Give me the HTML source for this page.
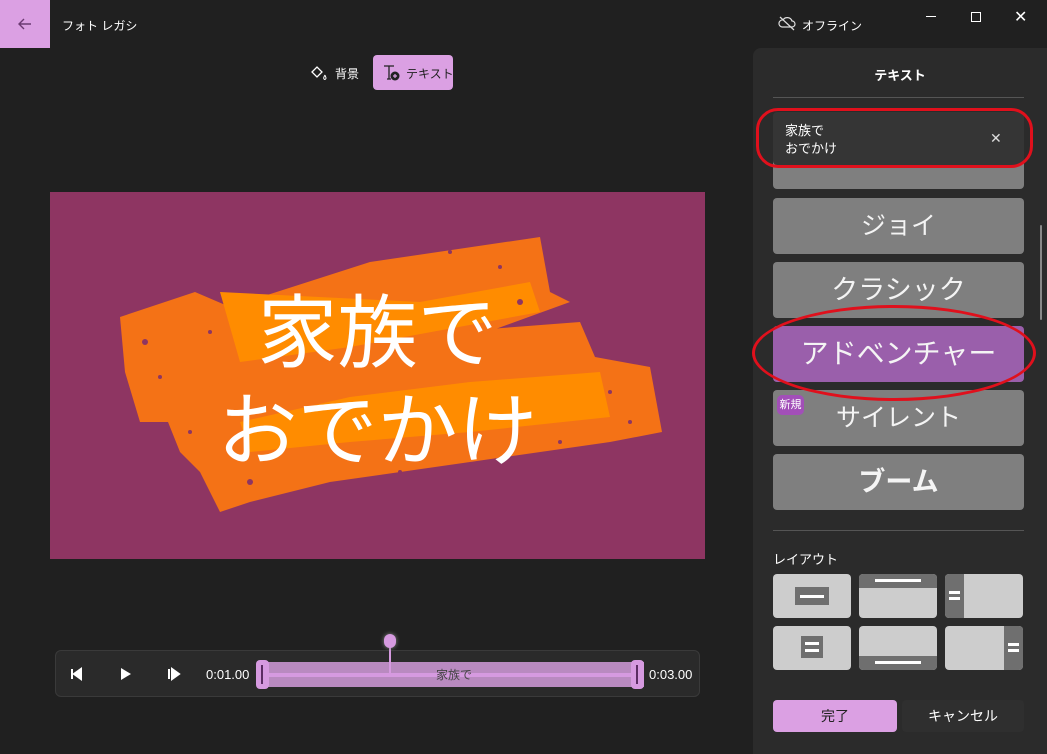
<!DOCTYPE html>
<html><head><meta charset="utf-8"><style>
*{margin:0;padding:0;box-sizing:border-box}
body{width:1047px;height:754px;background:#202020;font-family:"Liberation Sans","Noto Sans CJK JP",sans-serif;color:#fff;position:relative;overflow:hidden}
.a{position:absolute}
.style{position:absolute;left:773px;width:251px;height:56px;background:#7f7f7f;border-radius:4px;text-align:center;color:#f4f4f4;font-size:25px;line-height:56px}
.tile{position:absolute;width:78px;height:44px;background:#cdcdcd;border-radius:4px;overflow:hidden}
.bar{position:absolute;background:#fff;height:3px}
</style></head><body>
<div class="a" style="left:0;top:0;width:50px;height:48px;background:#dba0e3"></div>
<svg class="a" style="left:17px;top:17px" width="16" height="14"><path d="M14 7H2M7 2L2 7l5 5" stroke="#6b3a72" stroke-width="1.4" fill="none"/></svg>
<div class="a" style="left:62px;top:17px;font-size:12px">フォト レガシ</div>
<svg class="a" style="left:778px;top:15px" width="18" height="16"><path d="M4 12h10a3 3 0 0 0 0-6 5 5 0 0 0-9-1 3.5 3.5 0 0 0-1 7zM2 2l14 13" stroke="#ddd" stroke-width="1.2" fill="none"/></svg>
<div class="a" style="left:802px;top:17px;font-size:12px">オフライン</div>
<div class="a" style="left:926px;top:16px;width:10px;height:1px;background:#fff"></div>
<div class="a" style="left:971px;top:12px;width:10px;height:10px;border:1px solid #fff"></div>
<div class="a" style="left:1014px;top:7px;font-size:16px">✕</div>
<svg class="a" style="left:309px;top:64px" width="20" height="18"><path d="M3 8l5-5 5 5-5 5z" stroke="#fff" stroke-width="1.3" fill="none"/><path d="M16 11c-1 2-2 3-1 4s2 0 2-1-1-2-1-3z" stroke="#fff" stroke-width="1" fill="none"/></svg>
<div class="a" style="left:335px;top:65px;font-size:12px">背景</div>
<div class="a" style="left:373px;top:55px;width:80px;height:35px;background:#dba0e3;border-radius:4px"></div>
<svg class="a" style="left:382px;top:64px" width="20" height="18"><path d="M2 2h10M7 2v13M5 15h4" stroke="#222" stroke-width="1.3" fill="none"/><circle cx="13" cy="12" r="4.5" fill="#222"/><path d="M13 10v4M11 12h4" stroke="#dba0e3" stroke-width="1.2"/></svg>
<div class="a" style="left:406px;top:65px;font-size:12px;color:#222">テキスト</div>
<div class="a" style="left:50px;top:192px;width:655px;height:367px;background:#8e3562;overflow:hidden">
 <svg width="655" height="367" style="position:absolute;left:0;top:0">
  <polygon points="70,125 145,100 180,115 320,70 490,45 500,100 520,110 410,150 240,190 170,210 130,230 90,230 75,180" fill="#f47216"/>
  <polygon points="110,210 300,150 400,140 530,130 545,165 600,175 612,240 560,250 420,270 280,290 200,310 170,320 150,280 130,260" fill="#f47216"/>
  <polygon points="170,100 370,110 480,90 490,120 300,155 190,170" fill="#ff8c00"/>
  <polygon points="190,230 300,205 420,190 550,180 560,225 420,240 300,250 200,260" fill="#ff8c00"/>
  <g fill="#8e3562"><circle cx="95" cy="150" r="3"/><circle cx="110" cy="185" r="2"/><circle cx="160" cy="140" r="2"/><circle cx="450" cy="75" r="2"/><circle cx="470" cy="110" r="3"/><circle cx="560" cy="200" r="2"/><circle cx="580" cy="230" r="2"/><circle cx="200" cy="290" r="3"/><circle cx="350" cy="280" r="2"/><circle cx="140" cy="240" r="2"/><circle cx="510" cy="250" r="2"/><circle cx="400" cy="60" r="2"/></g>
 </svg>
 <div class="a" style="left:0;width:655px;top:93px;text-align:center;font-size:80px;line-height:98px;color:#fff">家族で<br>おでかけ</div>
</div>
<div class="a" style="left:55px;top:650px;width:645px;height:47px;background:#2a2a2a;border:1px solid #3a3a3a;border-radius:6px"></div>
<svg class="a" style="left:68px;top:666px" width="120" height="16"><path d="M4 3v10M6 8l7-5v10z" stroke="#fff" stroke-width="2" fill="#fff"/><path d="M53 2l10 6-10 6z" fill="#fff"/><path d="M101 3v10M104 3l7 5-7 5z" stroke="#fff" stroke-width="2" fill="#fff"/></svg>
<div class="a" style="left:206px;top:667px;font-size:13px">0:01.00</div>
<div class="a" style="left:649px;top:667px;font-size:13px">0:03.00</div>
<div class="a" style="left:262px;top:662px;width:382px;height:25px;background:#b98ac0"></div>
<div class="a" style="left:267px;top:673px;width:372px;height:4px;background:#d69ae0"></div>
<div class="a" style="left:256px;top:660px;width:13px;height:29px;background:#d69ae0;border-radius:4px"><div style="margin:5px 5px;width:2px;height:19px;background:#5b2d63"></div></div>
<div class="a" style="left:631px;top:660px;width:13px;height:29px;background:#d69ae0;border-radius:4px"><div style="margin:5px 5px;width:2px;height:19px;background:#5b2d63"></div></div>
<div class="a" style="left:436px;top:666px;font-size:12px;color:#444">家族で</div>
<div class="a" style="left:389px;top:645px;width:2px;height:28px;background:#d69ae0"></div>
<div class="a" style="left:384px;top:634px;width:12px;height:14px;border-radius:6px;background:#d69ae0;box-shadow:0 0 4px #888"></div>
<div class="a" style="left:753px;top:48px;width:294px;height:706px;background:#2b2b2b;border-radius:8px 0 0 0"></div>
<div class="a" style="left:753px;top:65px;width:294px;text-align:center;font-size:13px;font-weight:bold">テキスト</div>
<div class="a" style="left:773px;top:97px;width:251px;height:1px;background:#555"></div>
<div class="style" style="top:133px"></div>
<div class="style" style="top:198px">ジョイ</div>
<div class="style" style="top:262px;font-size:27px">クラシック</div>
<div class="style" style="top:326px;background:#9a5fab;font-size:28px">アドベンチャー</div>
<div class="style" style="top:390px">サイレント</div>
<div class="a" style="left:777px;top:395px;width:27px;height:20px;background:#a24fb8;border-radius:5px;font-size:11px;line-height:20px;text-align:center">新規</div>
<div class="style" style="top:454px;font-weight:bold;font-size:27px">ブーム</div>
<div class="a" style="left:773px;top:112px;width:251px;height:53px;background:#353535;border-radius:4px"></div>
<div class="a" style="left:785px;top:122px;font-size:13px;line-height:18px">家族で<br>おでかけ</div>
<div class="a" style="left:990px;top:130px;font-size:14px;color:#ddd">✕</div>
<div class="a" style="left:1040px;top:225px;width:2px;height:95px;background:#888;border-radius:1px"></div>
<div class="a" style="left:756px;top:108px;width:277px;height:60px;border:3px solid #e0101c;border-radius:22px"></div>
<div class="a" style="left:752px;top:305px;width:284px;height:96px;border:3px solid #e0101c;border-radius:50%"></div>
<div class="a" style="left:773px;top:530px;width:251px;height:1px;background:#555"></div>
<div class="a" style="left:773px;top:549px;font-size:13px">レイアウト</div>
<div class="tile" style="left:773px;top:574px"><div class="a" style="left:22px;top:13px;width:34px;height:18px;background:#6f6f6f"></div><div class="bar" style="left:27px;top:21px;width:24px"></div></div>
<div class="tile" style="left:859px;top:574px"><div class="a" style="left:0;top:0;width:78px;height:14px;background:#6f6f6f"></div><div class="bar" style="left:16px;top:5px;width:46px"></div></div>
<div class="tile" style="left:945px;top:574px"><div class="a" style="left:0;top:0;width:19px;height:44px;background:#6f6f6f"></div><div class="bar" style="left:4px;top:17px;width:11px"></div><div class="bar" style="left:4px;top:23px;width:11px"></div></div>
<div class="tile" style="left:773px;top:626px"><div class="a" style="left:28px;top:10px;width:22px;height:22px;background:#6f6f6f"></div><div class="bar" style="left:32px;top:16px;width:14px"></div><div class="bar" style="left:32px;top:23px;width:14px"></div></div>
<div class="tile" style="left:859px;top:626px"><div class="a" style="left:0;top:30px;width:78px;height:14px;background:#6f6f6f"></div><div class="bar" style="left:16px;top:35px;width:46px"></div></div>
<div class="tile" style="left:945px;top:626px"><div class="a" style="left:59px;top:0;width:19px;height:44px;background:#6f6f6f"></div><div class="bar" style="left:63px;top:17px;width:11px"></div><div class="bar" style="left:63px;top:23px;width:11px"></div></div>
<div class="a" style="left:773px;top:700px;width:124px;height:32px;background:#dba0e3;border-radius:4px;text-align:center;line-height:32px;font-size:14px;color:#222">完了</div>
<div class="a" style="left:902px;top:700px;width:122px;height:32px;background:#2f2f2f;border-radius:4px;text-align:center;line-height:32px;font-size:14px">キャンセル</div>
</body></html>
